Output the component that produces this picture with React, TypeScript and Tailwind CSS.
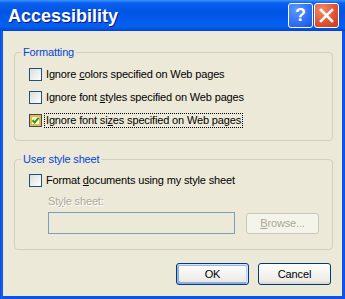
import React from 'react';

const font = { fontFamily: '"Liberation Sans", Arial, sans-serif' };

function Box({ checked = false }: { checked?: boolean }) {
  return (
    <div
      className={`w-[13px] h-[13px] shrink-0 border border-[#1c5180] flex items-center justify-center ${
        checked
          ? 'bg-[linear-gradient(135deg,#fbe9c3,#fff)] shadow-[inset_0_0_0_2px_#f8b636]'
          : 'bg-[linear-gradient(135deg,#dcdcd7,#fff)]'
      }`}
    >
      {checked && (
        <svg width="9" height="9" viewBox="0 0 9 9">
          <path d="M1.5 4.2 L3.6 6.4 L7.6 1.8" stroke="#21a121" strokeWidth="2" fill="none" />
        </svg>
      )}
    </div>
  );
}

function Row({ children, checked, focus }: { children: React.ReactNode; checked?: boolean; focus?: boolean }) {
  return (
    <div className="flex items-center gap-[2px] h-[13px]">
      <Box checked={checked} />
      <span
        className={`px-[1px] leading-[13px] border border-dotted ${focus ? 'border-black' : 'border-transparent'}`}
      >
        {children}
      </span>
    </div>
  );
}

function Group({ label, className, children }: { label: string; className: string; children: React.ReactNode }) {
  return (
    <div className={`relative ml-[11px] w-[319px] border border-[#d0d0bf] rounded-[4px] ${className}`}>
      <span className="absolute top-[-8px] left-[6px] px-[2px] bg-[#ece9d8] text-[#0046d5] leading-[14px]">
        {label}
      </span>
      {children}
    </div>
  );
}

export default function App() {
  return (
    <div
      className="w-[345px] h-[299px] flex flex-col bg-[linear-gradient(90deg,#0831d9,#166aee_1px,#0a54e8_3px)] text-[11px] tracking-[-0.15px] text-black"
      style={font}
    >
      <div className="h-[31px] shrink-0 flex items-center pl-[8px] pr-[6px] bg-[linear-gradient(180deg,#3d95ff,#0a5ff0_10%,#0054e3_40%,#0560f0_85%,#0050e0_95%,#0042d0)]">
        <span className="flex-1 text-white font-bold text-[18px] tracking-normal [text-shadow:1px_1px_#0a1883] mt-[2px]">
          Accessibility
        </span>
        <div className="flex gap-[1px]">
          <div className="w-[25px] h-[25px] rounded-[3px] border border-white bg-[radial-gradient(circle_at_30%_25%,#5c97ff,#2f6ef5_60%,#1b52d8)] flex items-center justify-center text-white font-bold text-[18px]">
            ?
          </div>
          <div className="w-[25px] h-[25px] rounded-[3px] border border-white bg-[radial-gradient(circle_at_30%_25%,#f08a6a,#e0502e_60%,#c63a1c)] flex items-center justify-center">
            <svg width="15" height="15" viewBox="0 0 15 15">
              <path d="M2 2 L13 13 M13 2 L2 13" stroke="#fff" strokeWidth="2.6" strokeLinecap="square" />
            </svg>
          </div>
        </div>
      </div>
      <div className="flex-1 mx-[3px] mb-[3px] bg-[#ece9d8] flex flex-col">
        <Group label="Formatting" className="mt-[21px] h-[89px]">
          <div className="flex flex-col gap-[10px] pt-[15px] pl-[14px]">
            <Row>
              Ignore <u>c</u>olors specified on Web pages
            </Row>
            <Row>
              Ignore font <u>s</u>tyles specified on Web pages
            </Row>
            <Row checked focus>
              Ignore font si<u>z</u>es specified on Web pages
            </Row>
          </div>
        </Group>
        <Group label="User style sheet" className="mt-[18px] h-[91px]">
          <div className="flex flex-col pt-[14px] pl-[14px]">
            <Row>
              Format <u>d</u>ocuments using my style sheet
            </Row>
            <div className="ml-[19px] mt-[8px] leading-[13px] text-[#aca899] [text-shadow:1px_1px_#fff]">
              St<u>y</u>le sheet:
            </div>
            <div className="ml-[19px] mt-[4px] flex items-start gap-[11px]">
              <div className="w-[187px] h-[22px] border border-[#7f9db9] bg-[#ece9d8]" />
              <div className="mt-[1px] w-[73px] h-[21px] rounded-[3px] border border-[#c9c7ba] bg-[#f5f4ea] text-[#aca899] flex items-center justify-center">
                <span>
                  <u>B</u>rowse...
                </span>
              </div>
            </div>
          </div>
        </Group>
        <div className="mt-[13px] flex justify-end gap-[9px] pr-[11px]">
          <div className="w-[73px] h-[22px] rounded-[3px] border border-[#003c74] bg-[linear-gradient(180deg,#fff,#ecebe6_86%,#d6d0c5)] shadow-[inset_-1px_1px_#cee7ff,inset_1px_2px_#98b8ea,inset_-2px_2px_#bcd4f6,inset_1px_-1px_#89ade4,inset_2px_-2px_#89ade4] flex items-center justify-center">
            OK
          </div>
          <div className="w-[73px] h-[22px] rounded-[3px] border border-[#003c74] bg-[linear-gradient(180deg,#fff,#ecebe6_86%,#d6d0c5)] flex items-center justify-center">
            Cancel
          </div>
        </div>
      </div>
    </div>
  );
}
